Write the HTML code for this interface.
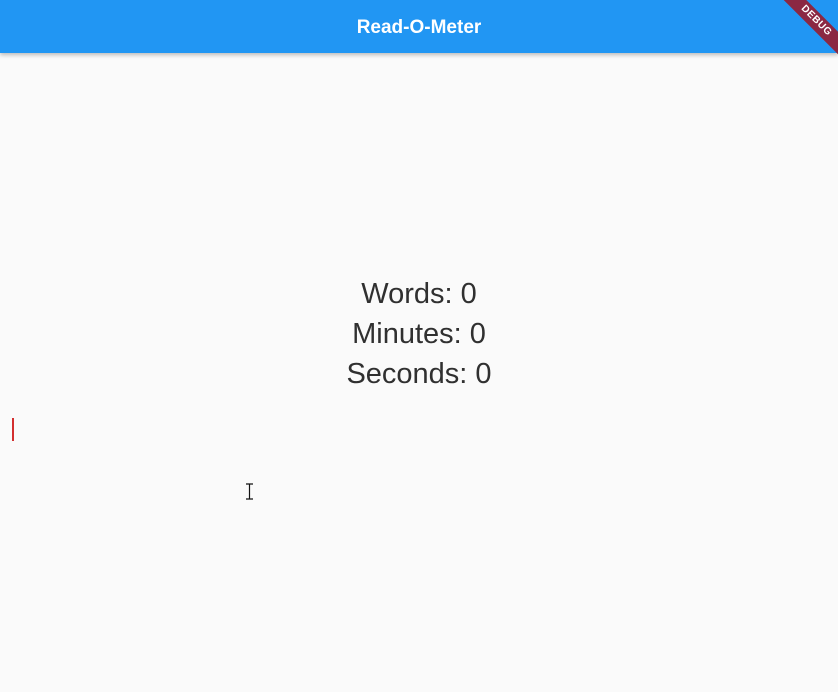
<!DOCTYPE html>
<html><head><meta charset="utf-8"><style>
html,body{margin:0;padding:0;width:838px;height:692px;overflow:hidden;background:#fafafa;font-family:"Liberation Sans","DejaVu Sans",sans-serif;}
.bar{position:absolute;left:0;top:0;width:838px;height:53px;background:#2196f3;box-shadow:0 2px 4px rgba(0,0,0,0.25);}
.title{position:absolute;left:0;width:838px;top:17px;text-align:center;color:#fff;font-weight:bold;font-size:19px;}
.ribbon{position:absolute;right:-33px;top:13px;width:110px;height:16px;background:#8b2843;transform:rotate(45deg);color:#fff;font-size:10px;font-weight:bold;text-align:center;line-height:16px;letter-spacing:0.5px;}
.t{position:absolute;left:0;width:838px;text-align:center;color:#303030;font-size:29px;}
.cur{position:absolute;left:12px;top:418px;width:2px;height:23px;background:#d32f2f;}
</style></head><body>
<div class="bar"><div class="title">Read-O-Meter</div><div class="ribbon">DEBUG</div></div>
<div class="t" style="top:278px">Words: 0</div>
<div class="t" style="top:318px">Minutes: 0</div>
<div class="t" style="top:358px">Seconds: 0</div>
<div class="cur"></div>
<svg style="position:absolute;left:245px;top:483px" width="9" height="17" viewBox="0 0 9 17"><path d="M1 1H8M4.5 1V16M1 16H8" stroke="#111" stroke-width="1.2" fill="none"/></svg>
</body></html>
